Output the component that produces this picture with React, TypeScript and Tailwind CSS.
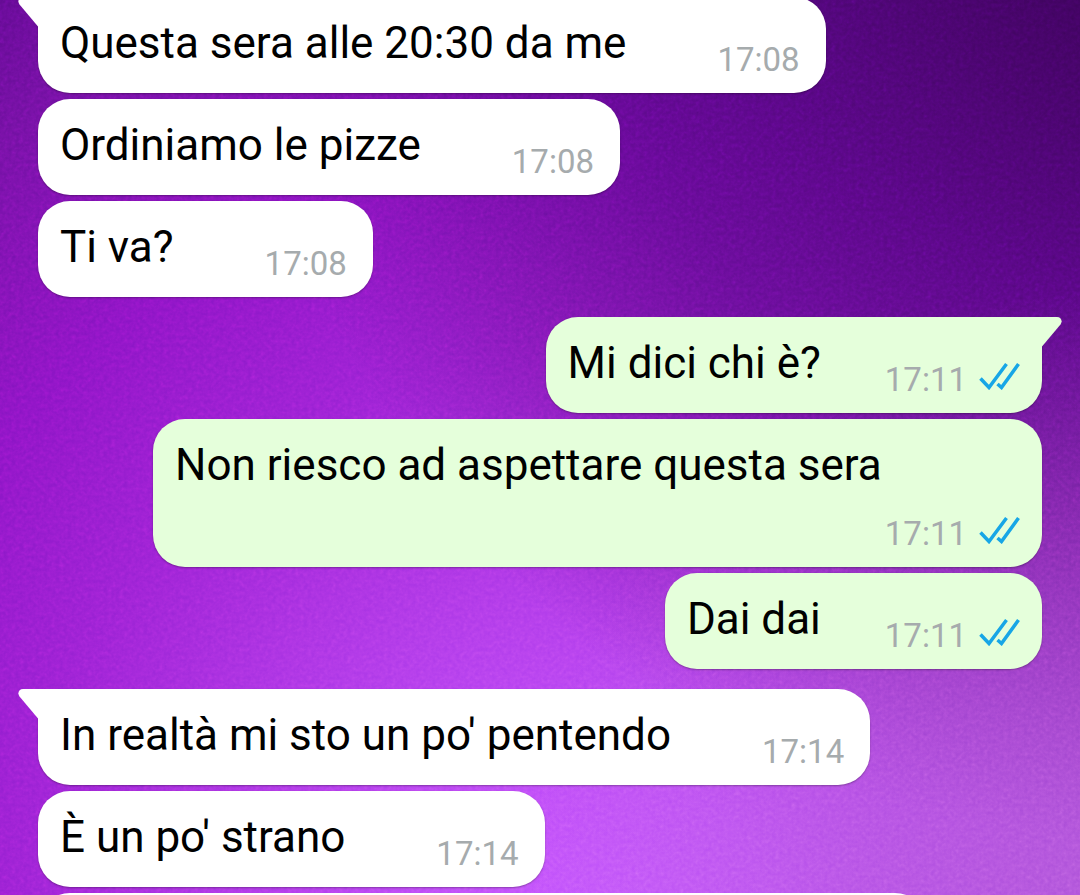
import clsx from 'clsx';

interface Message {
  id: number;
  text: string;
  time: string;
  mine?: boolean;
  first?: boolean;
}

const messages: Message[] = [
  { id: 1, text: 'Questa sera alle 20:30 da me', time: '17:08', first: true },
  { id: 2, text: 'Ordiniamo le pizze', time: '17:08' },
  { id: 3, text: 'Ti va?', time: '17:08' },
  { id: 4, text: 'Mi dici chi è?', time: '17:11', mine: true, first: true },
  { id: 5, text: 'Non riesco ad aspettare questa sera', time: '17:11', mine: true },
  { id: 6, text: 'Dai dai', time: '17:11', mine: true },
  { id: 7, text: "In realtà mi sto un po' pentendo", time: '17:14', first: true },
  { id: 8, text: "È un po' strano", time: '17:14' },
];

function Wallpaper() {
  return (
    <div className="absolute inset-0 -z-10 bg-[radial-gradient(circle_at_105%_100%,rgba(185,115,215,0.6)_0%,rgba(180,110,210,0.35)_20%,transparent_42%),radial-gradient(circle_at_105%_-5%,rgba(50,0,75,0.85)_0%,rgba(65,0,105,0.55)_35%,transparent_60%),radial-gradient(circle_at_56%_105%,#c455ff_0%,#bd4bf8_15%,#aa34e4_36%,#9a22d4_52%,#8a14c4_70%,#7010a0_90%,#560684_108%)]">
      <svg className="h-full w-full opacity-40 mix-blend-overlay" aria-hidden="true">
        <filter id="grain">
          <feTurbulence type="fractalNoise" baseFrequency="0.25" numOctaves="2" />
          <feColorMatrix type="saturate" values="0" />
        </filter>
        <rect width="100%" height="100%" filter="url(#grain)" />
      </svg>
    </div>
  );
}

function Tail({ mine }: { mine?: boolean }) {
  return (
    <svg
      viewBox="0 0 20 30"
      aria-hidden="true"
      className={clsx(
        'absolute top-0 h-[30px] w-5',
        mine ? 'left-full -scale-x-100 fill-[#e5ffdb]' : 'right-full fill-white'
      )}
    >
      <path d="M20 0H5C1 0-1 4 1.500 7.500L20 29.500Z" />
    </svg>
  );
}

function Ticks() {
  return (
    <svg
      viewBox="0 0 41 28"
      role="img"
      aria-label="Letto"
      className="mb-2 h-7 w-[41px] fill-none stroke-[#17a6e6] stroke-[3.5]"
    >
      <path d="M1.500 16.500L10 25.500L27.500 2M18.500 22L22.500 25.500L39.500 2" />
    </svg>
  );
}

function Bubble({ message }: { message: Message }) {
  const { text, time, mine, first } = message;
  return (
    <li
      className={clsx(
        'relative flex max-w-[889px] flex-wrap rounded-[32px] pt-5 pb-3.5 pl-[22px] shadow-[0_1px_2px_rgba(0,0,0,0.3)]',
        mine ? 'self-end bg-[#e5ffdb] pr-[22px]' : 'self-start bg-white pr-[26px]',
        first && (mine ? 'rounded-tr-none' : 'rounded-tl-none')
      )}
    >
      {first && <Tail mine={mine} />}
      <p className="mb-2.5 text-[44px] leading-[52px] text-black">{text}</p>
      <div
        className={clsx(
          'ml-auto flex items-center gap-3 self-end pt-3.5',
          mine ? 'pl-16' : 'pl-[91px]'
        )}
      >
        <time className="text-[33px] leading-[38px] text-[#a6abad]">{time}</time>
        {mine && <Ticks />}
      </div>
    </li>
  );
}

export default function App() {
  // consecutive messages of the same sender stay together
  const groups = messages.reduce<Message[][]>((acc, m) => {
    if (m.first) acc.push([]);
    acc[acc.length - 1].push(m);
    return acc;
  }, []);

  return (
    <main className="relative isolate h-screen overflow-hidden font-[Roboto,sans-serif]">
      <Wallpaper />
      <div className="-mt-[3px] flex flex-col gap-5 px-[38px]">
        {groups.map((group, i) => (
          <ul key={group[0].id} className="flex flex-col gap-1.5">
            {group.map((m) => (
              <Bubble key={m.id} message={m} />
            ))}
            {/* next message, still below the fold */}
            {i === groups.length - 1 && (
              <li className="h-24 w-full max-w-[889px] rounded-[32px] bg-white" />
            )}
          </ul>
        ))}
      </div>
    </main>
  );
}
